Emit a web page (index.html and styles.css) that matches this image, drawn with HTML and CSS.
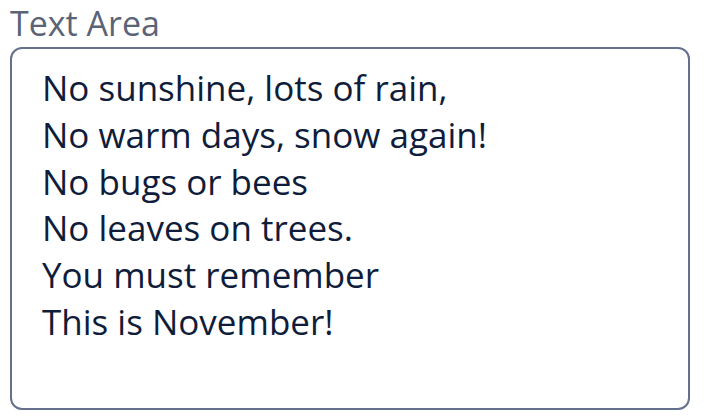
FILE: index.html
```html
<!DOCTYPE html>
<html>
<head>
<meta charset="utf-8">
<link rel="stylesheet" href="styles.css">
</head>
<body>
<div class="field">
<label class="label" for="ta">Text Area</label>
<textarea id="ta" class="area">No sunshine, lots of rain,
No warm days, snow again!
No bugs or bees
No leaves on trees.
You must remember
This is November!</textarea>
</div>
</body>
</html>
```
FILE: styles.css
```css
html, body {
  margin: 0;
  padding: 0;
  background: #ffffff;
}
.field {
  display: flex;
  flex-direction: column;
  padding: 0 14px 9px 10px;
  font-family: "Open Sans", sans-serif;
}
.label {
  font-size: 34px;
  line-height: 47px;
  color: #5b6377;
}
.area {
  box-sizing: border-box;
  height: 363px;
  border: 2px solid #64708c;
  border-radius: 12px;
  padding: 16px 30px 14px;
  font-family: "Open Sans", sans-serif;
  font-size: 35px;
  line-height: 46.8px;
  color: #0f1d3b;
  resize: none;
  outline: none;
  margin: 0;
}
```
